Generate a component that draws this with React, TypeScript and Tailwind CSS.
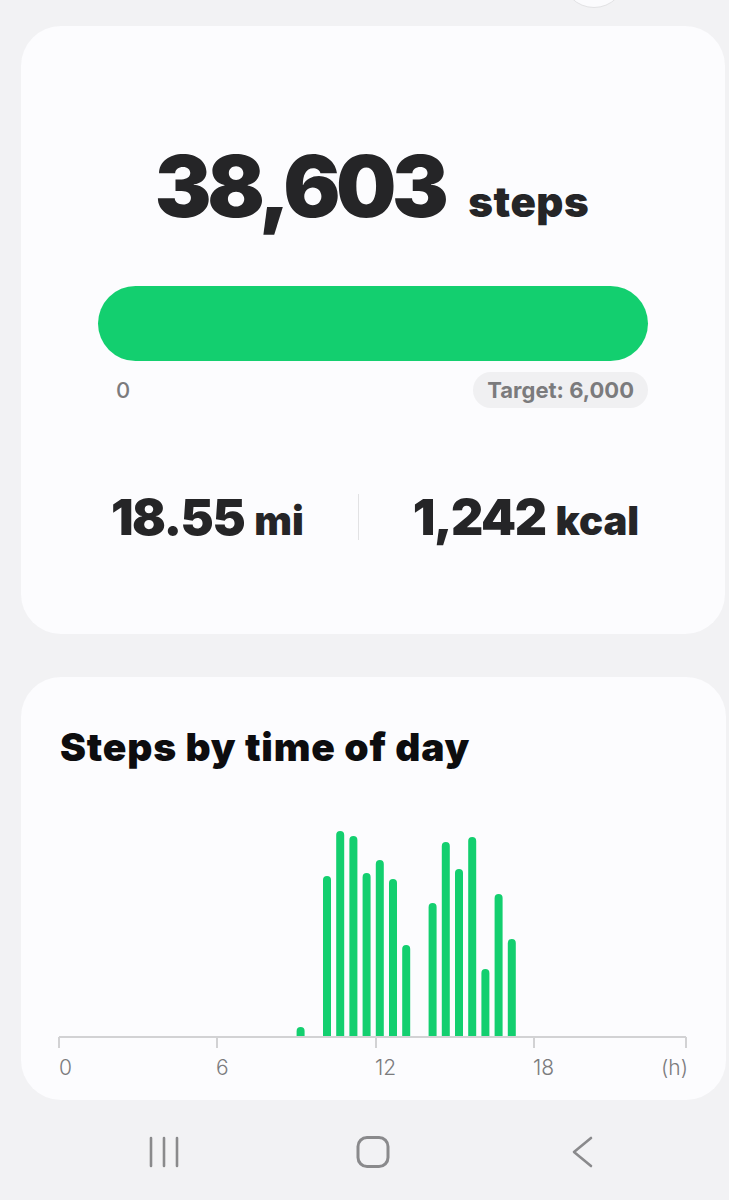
import React from 'react'

// half-hour slot index -> bar top (page y)
const bars: [number, number][] = [
  [18, 1025], [20, 874], [21, 829], [22, 834], [23, 871], [24, 858], [25, 877], [26, 943],
  [28, 901], [29, 840], [30, 867], [31, 835], [32, 967], [33, 892], [34, 937],
]

const AXIS_Y = 1035
const X0 = 59
const SLOT = 13.2

function StepsChart() {
  // svg spans the card width, origin shifted to page coordinates
  return (
    <svg width="705" height="300" viewBox="21 800 705 300" className="block">
      {bars.map(([slot, top]) => {
        const x = X0 + slot * SLOT
        return (
          <path
            key={slot}
            d={`M${x} ${AXIS_Y} V${top + 4} a4 4 0 0 1 8 0 V${AXIS_Y} Z`}
            fill="#13cf6f"
          />
        )
      })}
      <line x1={X0} y1={AXIS_Y} x2={686} y2={AXIS_Y} stroke="#d2d2d4" strokeWidth="2" />
      {[X0, 217, 376, 534, 686].map((x) => (
        <line key={x} x1={x} y1={AXIS_Y} x2={x} y2={1046} stroke="#d2d2d4" strokeWidth="2" />
      ))}
      <g fill="#7b7b7d" fontFamily="Inter, sans-serif" fontSize="21" fontWeight="300">
        <text x={X0} y={1073}>0</text>
        <text x={216} y={1073}>6</text>
        <text x={375} y={1073}>12</text>
        <text x={533} y={1073}>18</text>
        <text x={688} y={1073} textAnchor="end">(h)</text>
      </g>
    </svg>
  )
}

export default function App() {
  return (
    <div className="relative w-[729px] h-[1200px] overflow-hidden bg-[#f2f2f4] font-['Inter',sans-serif] text-[#252527]">
      {/* button peeking from above */}
      <div className="absolute left-[562px] top-[-56px] w-16 h-16 rounded-full bg-[#fbfbfd] border border-[#e2e2e4]" />

      <div className="pt-[26px]">
        {/* summary card */}
        <div className="ml-[21px] w-[704px] h-[608px] rounded-[40px] bg-[#fcfcfe] flex flex-col">
          <div className="mt-[118px] flex items-baseline justify-center gap-[24px] h-[86px] leading-none pr-[2px]">
            <span className="text-[85px] font-black tracking-[-4.5px]">38,603</span>
            <span className="text-[42px] font-black tracking-[0.5px]">steps</span>
          </div>
          <div className="mt-[56px] mx-[77px] h-[75px] rounded-full bg-[#13cf6f]" />
          <div className="mt-[11px] mx-[77px] flex items-center justify-between">
            <span className="ml-[18px] text-[22px] font-medium text-[#7b7b7d]">0</span>
            <span className="h-9 px-[14px] rounded-full bg-[#f0f0f2] flex items-center text-[22px] font-bold text-[#7b7b7d]">
              Target: 6,000
            </span>
          </div>
          <div className="mt-[84px] flex items-center justify-center gap-[54px] pl-[4px]">
            <div className="flex items-baseline gap-[10px] leading-none">
              <span className="text-[50px] font-black tracking-[-1.5px]">18.55</span>
              <span className="text-[40px] font-black">mi</span>
            </div>
            <div className="w-px h-[46px] bg-[#e2e2e4]" />
            <div className="flex items-baseline gap-[10px] leading-none">
              <span className="text-[50px] font-black tracking-[-1.5px]">1,242</span>
              <span className="text-[40px] font-black">kcal</span>
            </div>
          </div>
        </div>

        {/* chart card */}
        <div className="mt-[43px] ml-[21px] w-[705px] h-[423px] rounded-[40px] bg-[#fcfcfe] overflow-hidden">
          <h2 className="pt-[48px] pl-[39px] text-[39px] leading-[44px] font-black tracking-[0.8px] text-[#0d0d0f]">
            Steps by time of day
          </h2>
          <div className="mt-[33px]">
            <StepsChart />
          </div>
        </div>

        {/* navigation bar */}
        <div className="mt-[36px] ml-[59px] flex">
          <div className="w-[209px] flex justify-center">
            <svg width="32" height="32" viewBox="0 0 32 32" fill="none" stroke="#8a8a8c" strokeWidth="2.6" strokeLinecap="round">
              <path d="M3 2v28M16 2v28M29 2v28" />
            </svg>
          </div>
          <div className="w-[209px] flex justify-center">
            <svg width="34" height="32" viewBox="0 0 34 32" fill="none" stroke="#8a8a8c" strokeWidth="3">
              <rect x="2" y="1.5" width="30" height="29" rx="9" />
            </svg>
          </div>
          <div className="w-[209px] flex justify-center">
            <svg width="22" height="32" viewBox="0 0 22 32" fill="none" stroke="#8a8a8c" strokeWidth="2.6" strokeLinecap="round" strokeLinejoin="round">
              <path d="M20 2L3 16l17 14" />
            </svg>
          </div>
        </div>
      </div>
    </div>
  )
}
